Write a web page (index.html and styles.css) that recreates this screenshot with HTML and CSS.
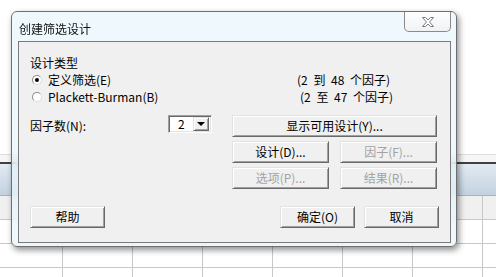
FILE: index.html
```html
<!DOCTYPE html>
<html lang="zh-CN">
<head>
    <meta charset="UTF-8">
    <title>创建筛选设计</title>
    <link rel="stylesheet" href="styles.css">
</head>
<body>
<div class="sheet">
    <div class="sheet-top"></div>
    <div class="sheet-gap"></div>
    <div class="sheet-band"></div>
    <div class="sheet-row gray"></div>
    <div class="sheet-row"></div>
    <div class="sheet-row"></div>
    <div class="sheet-row last"></div>
</div>

<div class="window">
    <div class="titlebar">
        <span class="title">创建筛选设计</span>
        <div class="close">
            <svg width="12" height="10" viewBox="0 0 12 10">
                <polygon points="0.5,0.5 3.5,0.5 6,3 8.5,0.5 11.5,0.5 7.5,5 11.5,9.5 8.5,9.5 6,7 3.5,9.5 0.5,9.5 4.5,5"
                         fill="#fff" stroke="#7a7a7a" stroke-width="1"/>
            </svg>
        </div>
    </div>
    <div class="client">
        <div class="type-section">
            <div class="type-left">
                <div class="group-label">设计类型</div>
                <div class="radio-row"><span class="radio checked"></span>定义筛选(E)</div>
                <div class="radio-row"><span class="radio"></span>Plackett-Burman(B)</div>
            </div>
            <div class="type-right">
                <div class="range">(2 到 48 个因子)</div>
                <div class="range second">(2 至 47 个因子)</div>
            </div>
        </div>

        <div class="factor-row">
            <span class="factor-label">因子数(N):</span>
            <div class="combo">
                <span class="combo-value">2</span>
                <span class="combo-btn"><span class="arrow"></span></span>
            </div>
            <button class="btn wide">显示可用设计(Y)...</button>
        </div>

        <div class="btn-row">
            <button class="btn half">设计(D)...</button>
            <button class="btn half disabled">因子(F)...</button>
        </div>
        <div class="btn-row">
            <button class="btn half disabled">选项(P)...</button>
            <button class="btn half disabled">结果(R)...</button>
        </div>

        <div class="footer">
            <button class="btn small">帮助</button>
            <div class="footer-right">
                <button class="btn small">确定(O)</button>
                <button class="btn small">取消</button>
            </div>
        </div>
    </div>
</div>
</body>
</html>
```

FILE: styles.css
```css
* {
    box-sizing: border-box;
    margin: 0;
    padding: 0;
}

body {
    width: 496px;
    height: 277px;
    overflow: hidden;
    position: relative;
    background: #fff;
    font-family: "Noto Sans CJK SC", "Liberation Sans", sans-serif;
    font-size: 12px;
    color: #000;
}

/* spreadsheet behind the dialog */
.sheet {
    height: 277px;
    overflow: hidden;
}

.sheet-top {
    height: 155px;
    border-bottom: 1px solid #dedede;
}

.sheet-gap {
    height: 7px;
    background: #f6f6f6;
}

.sheet-band {
    height: 34px;
    border-top: 2px solid #404040;
    border-bottom: 1px solid #a3b3c3;
    background: linear-gradient(#e2eaf3, #c3d1e0);
}

.sheet-row {
    height: 24px;
    border-bottom: 1px solid #c8c8c8;
    background-image: linear-gradient(to right, #c8c8c8 1px, transparent 1px);
    background-size: 70px 100%;
    background-position: 62px 0;
}

.sheet-row.gray {
    background-color: #f0f0f0;
}

.sheet-row.last {
    height: 9px;
    border-bottom: none;
}

/* dialog window */
.window {
    position: absolute;
    left: 11px;
    top: 11px;
    width: 446px;
    height: 236px;
    border: 1px solid #6f6f6f;
    border-radius: 6px;
    background: rgba(232, 246, 252, 0.7);
    backdrop-filter: blur(4px);
    box-shadow: 2px 3px 6px rgba(0, 0, 0, 0.45);
    display: flex;
    flex-direction: column;
}

.titlebar {
    height: 29px;
    display: flex;
    align-items: flex-start;
    justify-content: space-between;
}

.title {
    padding: 9px 0 0 7px;
    line-height: 16px;
    color: #111;
}

.close {
    width: 47px;
    height: 20px;
    margin-right: 5px;
    border: 1px solid #8a8a8a;
    border-top: none;
    border-radius: 0 0 5px 5px;
    background: linear-gradient(#fdfdfd, #f0f2f4);
    display: flex;
    align-items: center;
    justify-content: center;
}

.close svg {
    display: block;
}

.client {
    height: 202px;
    margin: 0 5px 0 6px;
    border: 1px solid #7b7b7b;
    background: #f0f0f0;
    padding: 13px 11px 0 11px;
}

.type-section {
    display: flex;
}

.type-left {
    width: 267px;
}

.group-label {
    line-height: 16px;
}

.radio-row {
    display: flex;
    align-items: center;
    height: 17px;
    padding-left: 2px;
}

.radio {
    width: 10px;
    height: 10px;
    border-radius: 50%;
    border: 1px solid #8e8e8e;
    border-right-color: #dcdcdc;
    border-bottom-color: #dcdcdc;
    background: #fff;
    margin-right: 6px;
    display: flex;
    align-items: center;
    justify-content: center;
}

.radio.checked::after {
    content: "";
    width: 4px;
    height: 4px;
    border-radius: 50%;
    background: #000;
}

.type-right {
    padding-top: 16px;
}

.range {
    height: 17px;
    line-height: 17px;
    word-spacing: 3px;
}

.range.second {
    padding-left: 3px;
}

.factor-row {
    display: flex;
    align-items: flex-start;
    margin-top: 10px;
}

.factor-label {
    width: 138px;
    line-height: 18px;
    padding-top: 2px;
}

.combo {
    width: 44px;
    height: 18px;
    border: 1px solid;
    border-color: #a0a0a0 #fff #fff #a0a0a0;
    box-shadow: inset 1px 1px #696969, inset -1px -1px #e3e3e3;
    background: #fff;
    display: flex;
    align-items: center;
    justify-content: space-between;
    padding: 0 2px 0 9px;
}

.combo-value {
    line-height: 14px;
}

.combo-btn {
    width: 16px;
    height: 14px;
    background: #f0f0f0;
    border: 1px solid;
    border-color: #e3e3e3 #696969 #696969 #e3e3e3;
    box-shadow: inset 1px 1px #fff, inset -1px -1px #a0a0a0;
    display: flex;
    align-items: center;
    justify-content: center;
}

.arrow {
    width: 0;
    height: 0;
    border-left: 4px solid transparent;
    border-right: 4px solid transparent;
    border-top: 4px solid #000;
}

.btn {
    height: 22px;
    font-family: inherit;
    font-size: 12px;
    color: #000;
    background: #f0f0f0;
    border: 1px solid;
    border-color: #e3e3e3 #696969 #696969 #e3e3e3;
    box-shadow: inset 1px 1px #fff, inset -1px -1px #a0a0a0;
    line-height: 18px;
}

.btn.disabled {
    color: #a3a3a3;
}

.btn.wide {
    width: 205px;
    margin-left: 20px;
}

.btn-row {
    display: flex;
    gap: 11px;
    padding-left: 202px;
    margin-top: 4px;
}

.btn.half {
    width: 97px;
}

.btn.small {
    width: 75px;
}

.footer {
    display: flex;
    justify-content: space-between;
    margin-top: 17px;
}

.footer-right {
    display: flex;
    gap: 9px;
}
```
